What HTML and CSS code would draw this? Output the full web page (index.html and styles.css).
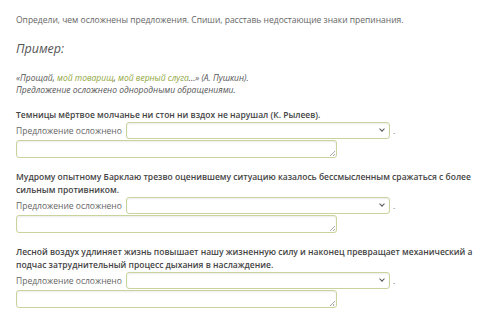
FILE: index.html
```html
<!DOCTYPE html>
<html lang="ru">
<head>
    <meta charset="UTF-8">
    <title>Осложнённые предложения</title>
    <link rel="stylesheet" href="styles.css">
</head>
<body>
    <p class="task">Определи, чем осложнены предложения. Спиши, расставь недостающие знаки препинания.</p>

    <h2 class="example-title">Пример:</h2>
    <p class="example">«Прощай, <span class="hl">мой товарищ</span>, <span class="hl">мой верный слуга</span>...» (А. Пушкин).<br>Предложение осложнено однородными обращениями.</p>

    <div class="item">
        <p class="sentence">Темницы мёртвое молчанье ни стон ни вздох не нарушал (К. Рылеев).</p>
        <div class="row">
            <span class="label">Предложение осложнено</span>
            <div class="select"><span class="chev"></span></div>
            <span class="dot">.</span>
        </div>
        <div class="answer"></div>
    </div>

    <div class="item">
        <p class="sentence">Мудрому опытному Барклаю трезво оценившему ситуацию казалось бессмысленным сражаться с более сильным противником.</p>
        <div class="row">
            <span class="label">Предложение осложнено</span>
            <div class="select"><span class="chev"></span></div>
            <span class="dot">.</span>
        </div>
        <div class="answer"></div>
    </div>

    <div class="item">
        <p class="sentence">Лесной воздух удлиняет жизнь повышает нашу жизненную силу и наконец превращает механический а подчас затруднительный процесс дыхания в наслаждение.</p>
        <div class="row">
            <span class="label">Предложение осложнено</span>
            <div class="select"><span class="chev"></span></div>
            <span class="dot">.</span>
        </div>
        <div class="answer"></div>
    </div>
</body>
</html>
```

FILE: styles.css
```css
body {
    margin: 0;
    padding: 13px 16px 0 16px;
    font-family: "Open Sans", "Noto Sans", sans-serif;
    font-size: 8.5px;
    color: #666;
    background-color: #fff;
}

p {
    margin: 0;
}

.task {
    line-height: 13px;
}

.example-title {
    margin: 14px 0 0 0;
    font-size: 12.5px;
    font-weight: normal;
    font-style: italic;
    color: #555;
    line-height: 18px;
}

.example {
    margin-top: 14px;
    font-size: 8.5px;
    font-style: italic;
    line-height: 12px;
    color: #555;
}

.hl {
    color: #8ea53a;
}

.item {
    margin-top: 12px;
}

.sentence {
    font-weight: 600;
    color: #444;
    line-height: 13.5px;
}

.row {
    display: flex;
    align-items: center;
}

.label {
    margin-right: 4px;
}

.select {
    width: 257px;
    height: 15px;
    border: 1px solid #c9d49c;
    border-radius: 3px;
    background: #fff;
    box-shadow: inset 0 1px 2px rgba(0, 0, 0, 0.08);
    display: flex;
    align-items: center;
    justify-content: flex-end;
    padding-right: 5px;
}

.chev {
    width: 3px;
    height: 3px;
    border-right: 1.5px solid #555;
    border-bottom: 1.5px solid #555;
    transform: rotate(45deg);
    margin-top: -2px;
}

.dot {
    margin-left: 3px;
}

.answer {
    width: 319px;
    height: 16px;
    margin-top: 1px;
    border: 1px solid #c9d49c;
    border-radius: 3px;
    box-shadow: inset 0 1px 2px rgba(0, 0, 0, 0.08);
    position: relative;
}

.answer::after {
    content: "";
    position: absolute;
    right: 1px;
    bottom: 1px;
    width: 5px;
    height: 5px;
    background: linear-gradient(135deg, transparent 45%, #aaa 45%, #aaa 55%, transparent 55%, transparent 70%, #aaa 70%, #aaa 80%, transparent 80%);
}
```
